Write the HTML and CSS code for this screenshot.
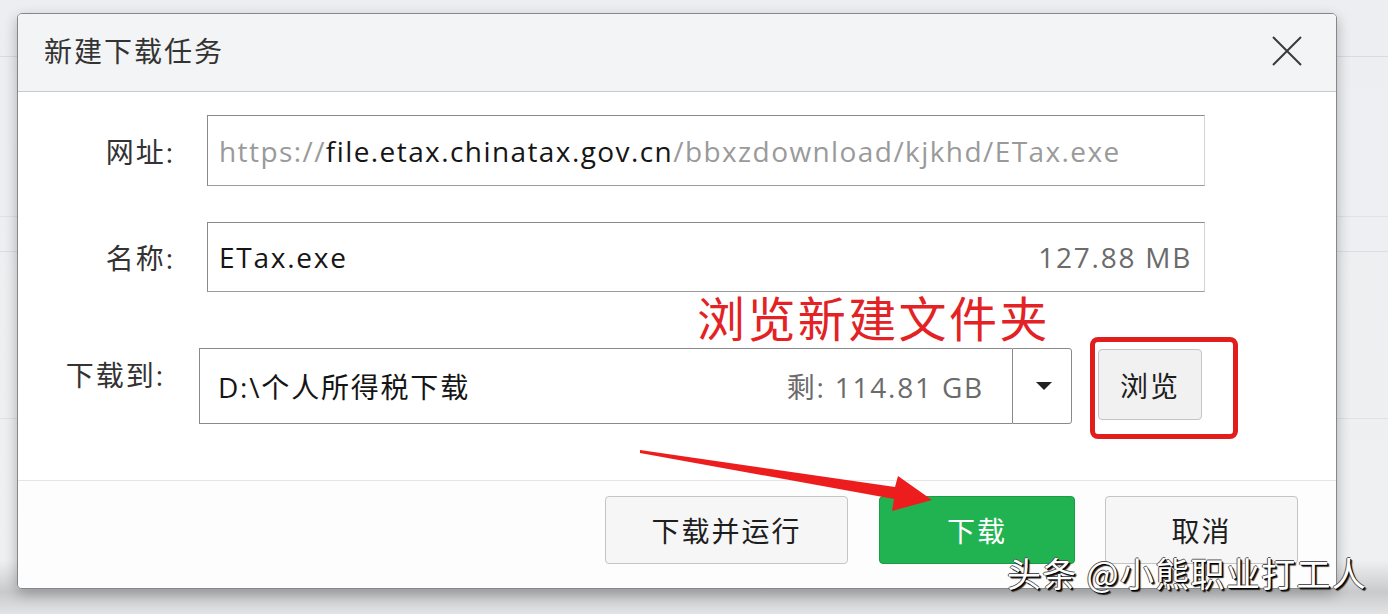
FILE: index.html
```html
<!DOCTYPE html>
<html lang="zh-CN">
<head>
<meta charset="utf-8">
<title>新建下载任务</title>
<link rel="stylesheet" href="styles.css">
</head>
<body>
<div class="dialog">
  <div class="titlebar">
    <div class="title">新建下载任务</div>
    <svg class="close" width="30" height="30" viewBox="0 0 30 30"><path d="M1 1 L29 29 M29 1 L1 29" stroke="#3a3a3a" stroke-width="2" fill="none"/></svg>
  </div>
  <div class="content">
    <div class="row">
      <div class="label">网址:</div>
      <div class="field field-url"><span class="muted">https://</span><span class="strong">file.etax.chinatax.gov.cn</span><span class="muted">/bbxzdownload/kjkhd/ETax.exe</span></div>
    </div>
    <div class="row row-name">
      <div class="label">名称:</div>
      <div class="field field-name"><span class="strong">ETax.exe</span><span class="size">127.88 MB</span></div>
    </div>
    <div class="row row-save">
      <div class="label label-save">下载到:</div>
      <div class="combo">
        <div class="combo-text"><span class="strong">D:\个人所得税下载</span><span class="size">剩: 114.81 GB</span></div>
        <div class="combo-drop"><span class="tri"></span></div>
      </div>
      <div class="btn btn-browse">浏览</div>
    </div>
  </div>
  <div class="footer">
    <div class="btn btn-run">下载并运行</div>
    <div class="btn btn-go">下载</div>
    <div class="btn btn-cancel">取消</div>
  </div>
</div>
<div class="note">浏览新建文件夹</div>
<div class="redbox"></div>
<svg class="arrow" width="1388" height="614" viewBox="0 0 1388 614"><polygon points="640,450 895,487 898,476 932,500 892,511 894,499 640,453" fill="#ee1d1d"/></svg>
<div class="watermark">头条 @小熊职业打工人</div>
</body>
</html>
```
FILE: styles.css
```css
html, body {
  margin: 0;
  padding: 0;
}
body {
  width: 1388px;
  height: 614px;
  overflow: hidden;
  position: relative;
  font-family: "Open Sans", "Noto Sans CJK SC", sans-serif;
  color: #2b2b2b;
  background:
    linear-gradient(to bottom, transparent 56px, #d9dbde 56px, #d9dbde 57px, transparent 57px),
    linear-gradient(to bottom, transparent 216px, #dfe1e4 216px, #dfe1e4 217px, transparent 217px),
    linear-gradient(to bottom, transparent 251px, #dcdee1 251px, #dcdee1 252px, transparent 252px),
    linear-gradient(to bottom, transparent 418px, #dfe1e4 418px, #dfe1e4 419px, transparent 419px),
    linear-gradient(to bottom, #eceef1 0, #eef0f2 560px, #c9cacc 592px, #e2e3e5 614px);
}
.dialog {
  margin: 13px 0 0 17px;
  width: 1318px;
  height: 574px;
  border: 1px solid #85878a;
  border-radius: 5px;
  background: #fff;
  display: flex;
  flex-direction: column;
  box-shadow: 0 5px 14px rgba(0, 0, 0, 0.28);
  overflow: hidden;
}
.titlebar {
  height: 77px;
  flex: none;
  background: #f3f4f5;
  border-bottom: 1px solid #c9cacc;
  display: flex;
  align-items: center;
  justify-content: space-between;
  padding: 0 34px 0 26px;
}
.title {
  font-size: 28px;
  letter-spacing: 2px;
  color: #333;
  margin-top: -5px;
}
.close {
  display: block;
  margin-top: -4px;
}
.content {
  flex: 1;
  padding-top: 23px;
  display: flex;
  flex-direction: column;
}
.row {
  display: flex;
  align-items: center;
}
.label {
  width: 157px;
  margin-right: 32px;
  text-align: right;
  font-size: 28px;
  letter-spacing: 2px;
  color: #333;
}
.field {
  width: 973px;
  height: 69px;
  border: 1px solid #8a8a8a;
  border-right-color: #d4d4d4;
  border-bottom-color: #9c9c9c;
  display: flex;
  align-items: center;
  justify-content: space-between;
  padding: 0 12px 0 11px;
  box-sizing: content-box;
  font-size: 28px;
  letter-spacing: 1.75px;
}
.field-url {
  padding-right: 0;
  width: 985px;
  justify-content: flex-start;
  white-space: nowrap;
  overflow: hidden;
  letter-spacing: 1.42px;
}
.row-name {
  margin-top: 36px;
}
.field-name {
  height: 68px;
}
.muted {
  color: #9a9a9a;
}
.strong {
  color: #151515;
}
.size {
  color: #6b6b6b;
}
.row-save {
  margin-top: 56px;
  align-items: flex-start;
}
.label-save {
  width: 147px;
  margin-right: 34px;
  padding-top: 6px;
}
.combo {
  display: flex;
  height: 76px;
}
.combo-text {
  width: 766px;
  border: 1px solid #8a8a8a;
  border-right: none;
  display: flex;
  align-items: center;
  justify-content: space-between;
  padding: 0 28px 0 18px;
  font-size: 28px;
  letter-spacing: 1.8px;
  box-sizing: content-box;
  height: 74px;
  white-space: nowrap;
}
.combo-drop {
  width: 58px;
  height: 74px;
  border: 1px solid #8a8a8a;
  border-radius: 0 3px 3px 0;
  display: flex;
  align-items: center;
  justify-content: center;
}
.tri {
  width: 0;
  height: 0;
  border-left: 8px solid transparent;
  border-right: 8px solid transparent;
  border-top: 8px solid #222;
  margin-left: 3px;
}
.btn {
  box-sizing: border-box;
  border: 1px solid #c4c4c4;
  border-radius: 4px;
  background: #f6f6f7;
  display: flex;
  align-items: center;
  justify-content: center;
  font-size: 28px;
  letter-spacing: 2px;
  color: #1e1e1e;
}
.btn-browse {
  width: 104px;
  height: 71px;
  margin-left: 26px;
  margin-top: 1px;
  background: #f1f1f2;
}
.footer {
  height: 108px;
  flex: none;
  border-top: 1px solid #e4e5e7;
  background: #fdfdfd;
  display: flex;
  justify-content: flex-end;
  align-items: flex-start;
  padding: 15px 38px 0 0;
  box-sizing: border-box;
  gap: 30px;
}
.btn-run {
  width: 243px;
  height: 68px;
}
.btn-go {
  width: 196px;
  height: 68px;
  background: #21b352;
  border-color: #1a9c45;
  color: #fff;
  margin-left: 1px;
}
.btn-cancel {
  width: 193px;
  height: 68px;
}
.note {
  position: absolute;
  left: 697px;
  top: 288px;
  font-family: "Noto Sans CJK SC", sans-serif;
  font-size: 48px;
  line-height: 56px;
  color: #e32225;
  letter-spacing: 2.4px;
}
.redbox {
  position: absolute;
  left: 1090px;
  top: 337px;
  width: 148px;
  height: 102px;
  box-sizing: border-box;
  border: 5px solid #e11d1d;
  border-radius: 8px;
}
.arrow {
  position: absolute;
  left: 0;
  top: 0;
}
.watermark {
  position: absolute;
  left: 1007px;
  top: 552px;
  font-family: "Noto Sans CJK SC", sans-serif;
  font-size: 34px;
  line-height: 42px;
  letter-spacing: 1.3px;
  color: #fff;
  text-shadow: 1px 1px 0 #000, 2px 2px 1px #222, -1px 0 0 #555, 0 -1px 0 #555;
}
```
